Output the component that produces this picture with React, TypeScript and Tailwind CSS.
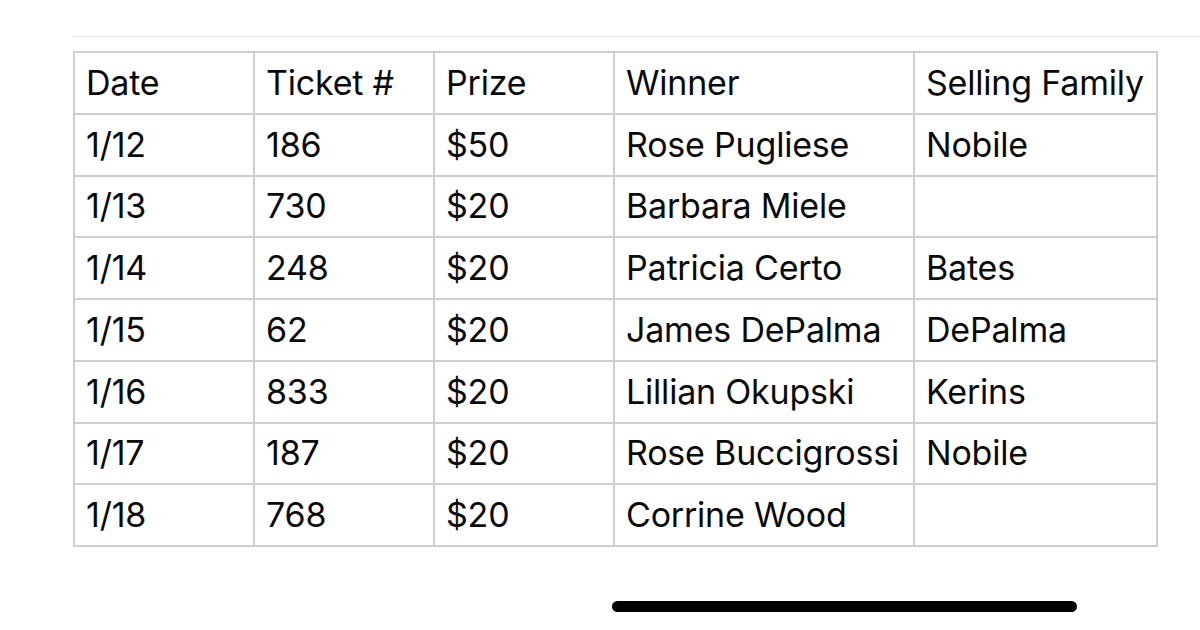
import React from "react";

const rows = [
  ["Date", "Ticket #", "Prize", "Winner", "Selling Family"],
  ["1/12", "186", "$50", "Rose Pugliese", "Nobile"],
  ["1/13", "730", "$20", "Barbara Miele", ""],
  ["1/14", "248", "$20", "Patricia Certo", "Bates"],
  ["1/15", "62", "$20", "James DePalma", "DePalma"],
  ["1/16", "833", "$20", "Lillian Okupski", "Kerins"],
  ["1/17", "187", "$20", "Rose Buccigrossi", "Nobile"],
  ["1/18", "768", "$20", "Corrine Wood", ""],
];

const widths = ["w-[180px]", "w-[180px]", "w-[180px]", "w-[300px]", "w-[243px]"];

export default function App() {
  return (
    <div className="w-[1200px] h-[630px] bg-white overflow-hidden relative" style={{ fontFamily: "Inter, 'Open Sans', sans-serif" }}>
      <div className="pt-[36px] pl-[73px]">
        <div className="border-t border-[#e3e3e3] pt-[14px]">
          <table className="border-collapse table-fixed text-[#0a0a0a]">
            <tbody>
              {rows.map((r, i) => (
                <tr key={i} className="h-[61.75px]">
                  {r.map((c, j) => (
                    <td
                      key={j}
                      className={`${widths[j]} border-2 border-[#cecece] pl-[11px] text-[34px] leading-none align-middle whitespace-nowrap tracking-[-0.2px]`}
                    >
                      {c}
                    </td>
                  ))}
                </tr>
              ))}
            </tbody>
          </table>
        </div>
      </div>
      <div className="absolute left-[612px] top-[601px] w-[465px] h-[11px] rounded-full bg-black" />
    </div>
  );
}
